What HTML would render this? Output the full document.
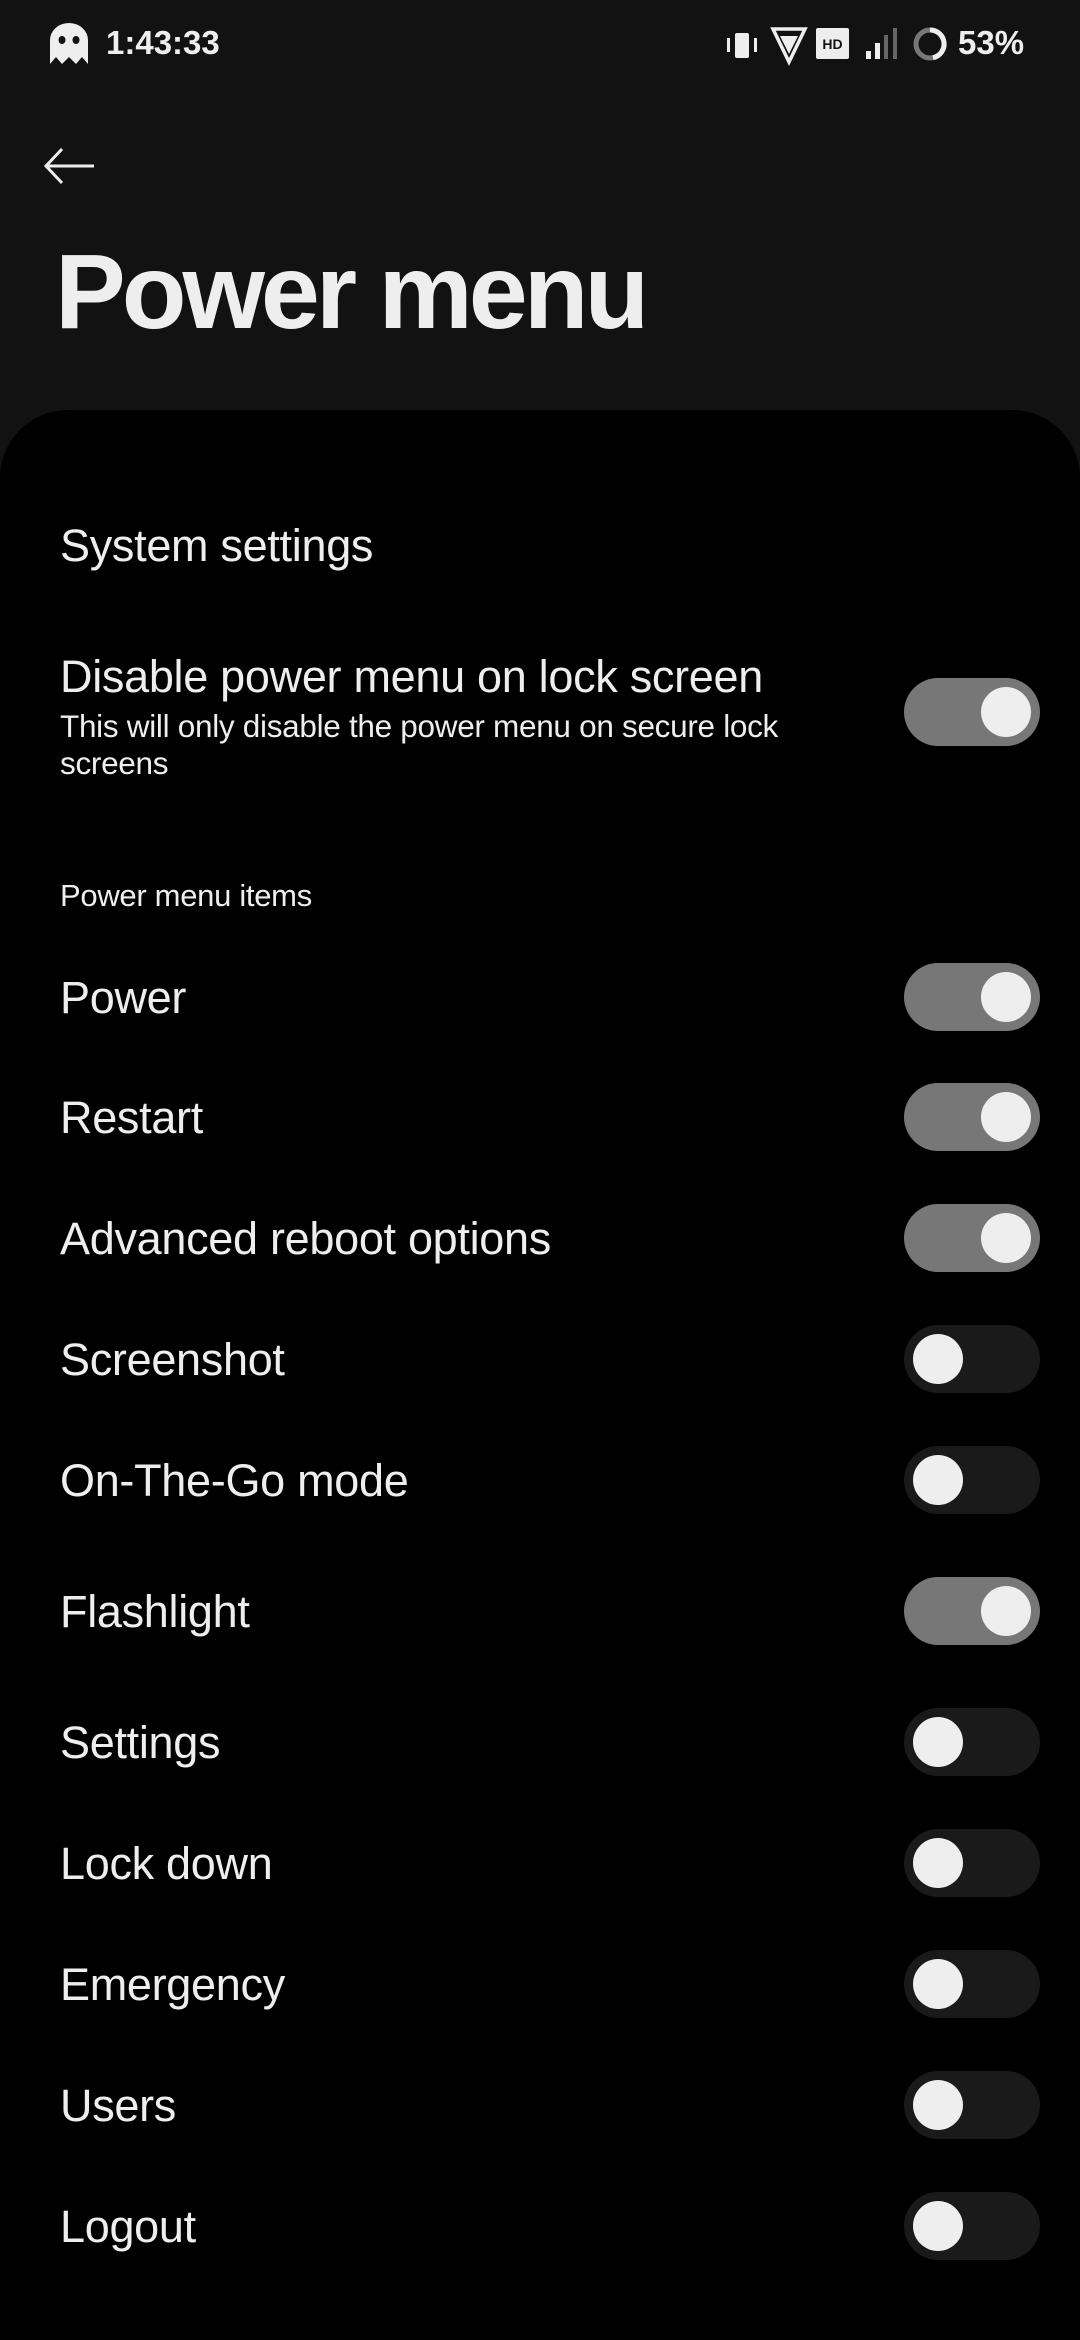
<!DOCTYPE html>
<html><head><meta charset="utf-8"><style>
*{margin:0;padding:0;box-sizing:border-box}
body{width:1080px;height:2340px;background:#121212;font-family:"Liberation Sans",sans-serif;color:#eee;position:relative;overflow:hidden}
.abs{position:absolute}
.card{position:absolute;left:0;top:410px;width:1080px;height:1930px;background:#000;border-radius:68px 68px 0 0}
.t{position:absolute;left:60px;font-size:45px;line-height:52px;transform:translateY(-50%);white-space:nowrap;letter-spacing:-0.3px}
.tg{position:absolute;left:904px;width:136px;height:68px;border-radius:34px;transform:translateY(-50%)}
.tg.on{background:#777}
.tg.off{background:#1a1a1a}
.tg::after{content:"";position:absolute;top:9px;width:50px;height:50px;border-radius:50%;background:#eee}
.tg.on::after{left:77px}
.tg.off::after{left:9px}
</style></head><body>
<svg class="abs" style="left:48px;top:22px" width="42" height="44" viewBox="0 0 42 44"><path d="M2 42V18A19 17 0 0 1 40 18V42l-6-7-6 7-7-7-7 7-6-7z" fill="#eee"/><ellipse cx="14" cy="18" rx="3.5" ry="4" fill="#121212"/><ellipse cx="28" cy="18" rx="3.5" ry="4" fill="#121212"/></svg>
<div class="abs" style="left:106px;top:24px;font-size:33px;font-weight:bold;color:#eee">1:43:33</div>
<svg class="abs" style="left:700px;top:26px" width="330" height="40" viewBox="0 0 330 40">
<rect x="35" y="7" width="14" height="25" rx="2" fill="#eee"/><rect x="27" y="12" width="3" height="14" fill="#eee"/><rect x="54" y="12" width="3" height="14" fill="#eee"/>
<path d="M73 3h32l-16 33z" fill="none" stroke="#eee" stroke-width="3.5"/><path d="M80 10h18l-9 18z" fill="#eee"/>
<rect x="116" y="2" width="33" height="31" rx="2" fill="#eee"/><text x="132.5" y="23" font-size="14" font-weight="bold" text-anchor="middle" fill="#121212" font-family="Liberation Sans">HD</text>
<rect x="166" y="25" width="5" height="8" fill="#eee"/><rect x="175" y="17" width="5" height="16" fill="#eee"/><rect x="184" y="9" width="4" height="24" fill="#666"/><rect x="193" y="2" width="4" height="31" fill="#666"/>
<circle cx="230" cy="18" r="14" fill="none" stroke="#777" stroke-width="5"/><path d="M230 4A14 14 0 0 1 233 31.7" fill="none" stroke="#eee" stroke-width="5"/>
</svg>
<div class="abs" style="left:958px;top:24px;font-size:33px;font-weight:bold;color:#eee">53%</div>
<svg class="abs" style="left:42px;top:146px" width="56" height="40" viewBox="0 0 56 40"><path d="M52 20H4M20 3L4 20l16 17" fill="none" stroke="#eee" stroke-width="3"/></svg>
<div class="abs" style="left:55px;top:232px;font-size:106px;font-weight:bold;letter-spacing:-4px;line-height:120px">Power menu</div>
<div class="card"></div>
<div class="t" style="top:546px">System settings</div>
<div class="t" style="top:677px">Disable power menu on lock screen</div>
<div class="abs" style="left:60px;top:708px;font-size:31.5px;line-height:37px;width:900px;letter-spacing:-0.3px">This will only disable the power menu on secure lock<br>screens</div>
<div class="tg on" style="top:712px"></div>
<div class="abs" style="left:60px;top:878px;font-size:31px;letter-spacing:-0.3px">Power menu items</div>
<div class="t" style="top:998px">Power</div><div class="tg on" style="top:997px"></div>
<div class="t" style="top:1118px">Restart</div><div class="tg on" style="top:1117px"></div>
<div class="t" style="top:1239px">Advanced reboot options</div><div class="tg on" style="top:1238px"></div>
<div class="t" style="top:1360px">Screenshot</div><div class="tg off" style="top:1359px"></div>
<div class="t" style="top:1481px">On-The-Go mode</div><div class="tg off" style="top:1480px"></div>
<div class="t" style="top:1612px">Flashlight</div><div class="tg on" style="top:1611px"></div>
<div class="t" style="top:1743px">Settings</div><div class="tg off" style="top:1742px"></div>
<div class="t" style="top:1864px">Lock down</div><div class="tg off" style="top:1863px"></div>
<div class="t" style="top:1985px">Emergency</div><div class="tg off" style="top:1984px"></div>
<div class="t" style="top:2106px">Users</div><div class="tg off" style="top:2105px"></div>
<div class="t" style="top:2227px">Logout</div><div class="tg off" style="top:2226px"></div>
</body></html>
